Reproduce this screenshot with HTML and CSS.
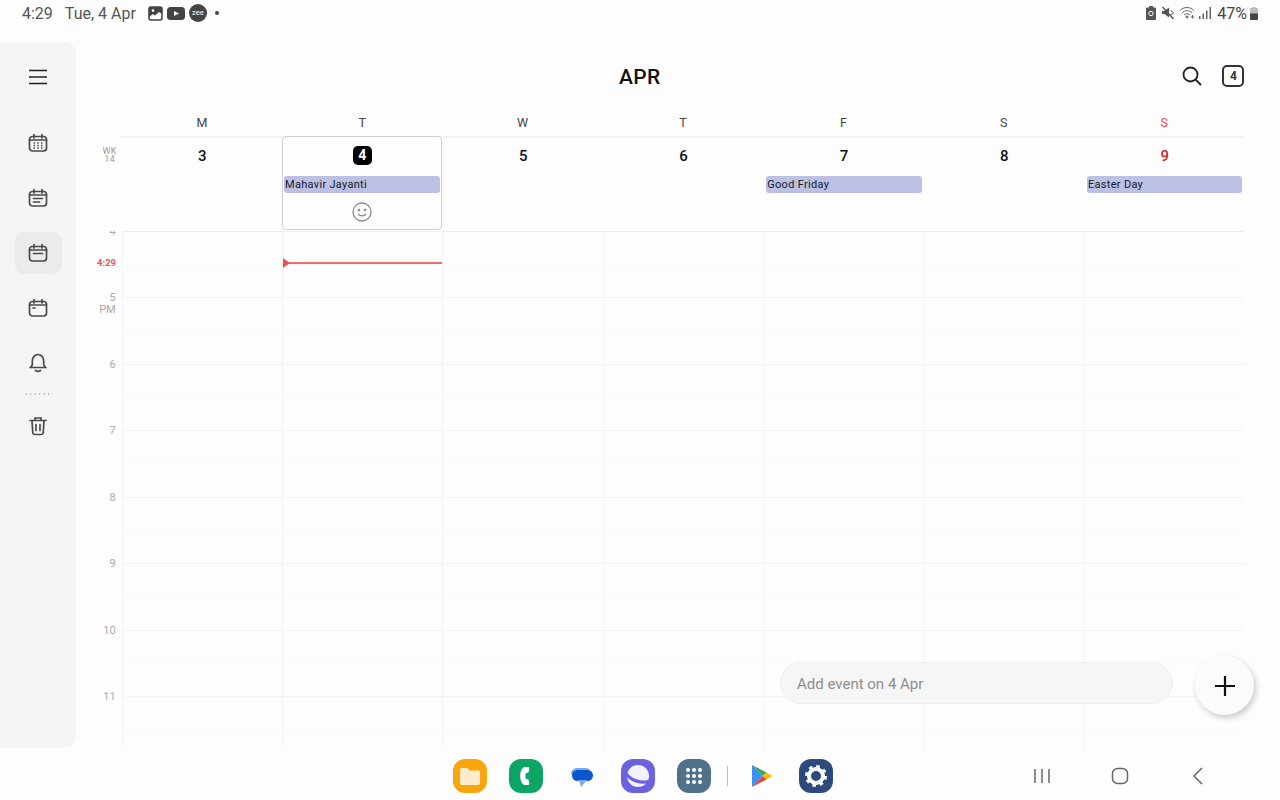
FILE: index.html
```html
<!DOCTYPE html>
<html lang="en">
<head>
<meta charset="utf-8">
<title>Calendar</title>
<link rel="stylesheet" href="styles.css">
</head>
<body>
<div class="status">
  <span class="clock">4:29</span>
  <span class="date">Tue, 4 Apr</span>
  <span class="notifs">
    <svg width="15" height="15" viewBox="0 0 15 15"><rect x="1" y="1" width="13" height="13" rx="2" fill="none" stroke="#444" stroke-width="1.6"/><path d="M1 1h13v7l-3-2-4 3.5L5 8l-4 3z" fill="#444"/><circle cx="5" cy="4.600" r="1.300" fill="#fff"/></svg>
    <svg width="18" height="13" viewBox="0 0 18 13"><rect width="18" height="13" rx="3.500" fill="#444"/><path d="M7 4l5 2.500L7 9z" fill="#fff"/></svg>
    <span class="zee">zee</span>
    <span class="dot"></span>
  </span>
  <span class="sysicons">
    <svg width="10" height="14" viewBox="0 0 10 14"><path d="M3 0h4v1.500h2a1 1 0 0 1 1 1V13a1 1 0 0 1-1 1H1a1 1 0 0 1-1-1V2.500a1 1 0 0 1 1-1h2z" fill="#555"/><circle cx="5" cy="7.500" r="2.200" fill="none" stroke="#fff" stroke-width="1"/></svg>
    <svg class="gap5" width="14" height="14" viewBox="0 0 14 14"><path d="M1 5h2.500L8 1.500v10L3.500 8H1z" fill="#555"/><path d="M9.500 4.500l3 2M9.500 8.500l3-1" stroke="#555" stroke-width="1"/><path d="M1.500 1l11 12" stroke="#555" stroke-width="1.400"/></svg>
    <svg class="gap4" width="17" height="14" viewBox="0 0 17 14" fill="none" stroke="#666" stroke-width="1"><path d="M1 4.500c4-4 10-4 14 0"/><path d="M3 6.800c3-2.800 7-2.800 10 0"/><path d="M5 9c2-1.600 4-1.600 6 0"/><circle cx="8" cy="11" r="1" fill="#666"/><path d="M13.500 9v3.500M12 11h3"/></svg>
    <svg class="gap3" width="13" height="14" viewBox="0 0 13 14" fill="#666"><rect x="0" y="10" width="1.500" height="3"/><rect x="3.500" y="7.500" width="1.500" height="5.500"/><rect x="7" y="4.500" width="1.500" height="8.500"/><rect x="10.500" y="1" width="1.500" height="12"/></svg>
    <span class="pct gap5">47%</span>
    <svg class="gap3" width="8" height="13" viewBox="0 0 8 13"><path d="M2.500 0h3v1H7a1 1 0 0 1 1 1v10a1 1 0 0 1-1 1H1a1 1 0 0 1-1-1V2a1 1 0 0 1 1-1h1.500z" fill="#bbb"/><path d="M0 6.500h8V12a1 1 0 0 1-1 1H1a1 1 0 0 1-1-1z" fill="#444"/></svg>
  </span>
</div>

<div class="middle">
  <aside class="rail">
    <button class="rail-btn menu"><svg width="18" height="16" viewBox="0 0 18 16" stroke="#222" stroke-width="1.700"><path d="M0 1.500h18M0 8h18M0 14.500h18"/></svg></button>
    <div class="rail-group">
      <button class="rail-btn"><svg class="ico" viewBox="0 0 20 20"><rect x="1.500" y="3.500" width="17" height="14.500" rx="3"/><path d="M6 1.500v3.500M14 1.500v3.500M1.500 7h17"/><path class="thin" d="M5.500 10h1.500M9.250 10h1.500M13 10h1.500M5.500 12.500h1.500M9.250 12.500h1.500M13 12.500h1.500M5.500 15h1.500M9.250 15h1.500M13 15h1.500"/></svg></button>
      <button class="rail-btn"><svg class="ico" viewBox="0 0 20 20"><rect x="1.500" y="3.500" width="17" height="14.500" rx="3"/><path d="M6 1.500v3.500M14 1.500v3.500M1.500 7h17M5.500 10.500h9M5.500 14h6"/></svg></button>
      <button class="rail-btn active"><svg class="ico" viewBox="0 0 20 20"><rect x="1.500" y="3.500" width="17" height="14.500" rx="3"/><path d="M6 1.500v3.500M14 1.500v3.500M1.500 7h17M5.500 10.500h9"/></svg></button>
      <button class="rail-btn"><svg class="ico" viewBox="0 0 20 20"><rect x="1.500" y="3.500" width="17" height="14.500" rx="3"/><path d="M6 1.500v3.500M14 1.500v3.500M1.500 7h17M5 10h2"/></svg></button>
      <button class="rail-btn"><svg class="ico" viewBox="0 0 20 20"><path d="M2.500 14.500h15l-1.800-2.500V8a5.700 6.500 0 0 0-11.400 0v4z"/><path d="M7.500 17.500c1.500 1 3.500 1 5 0"/></svg></button>
    </div>
    <div class="rail-dots"></div>
    <button class="rail-btn"><svg class="ico" viewBox="0 0 20 20"><path d="M2 4.500h16M4 4.500l.8 12.500a2 2 0 0 0 2 1.500h6.400a2 2 0 0 0 2-1.500L16 4.500M7 4.500V2h6v2.500M8 8.500v6M12 8.500v6"/></svg></button>
  </aside>

  <main class="cal">
    <header class="cal-head">
      <h1 class="month">APR</h1>
      <div class="cal-actions">
        <svg width="22" height="22" viewBox="0 0 22 22" fill="none" stroke="#222" stroke-width="1.800"><circle cx="9.500" cy="9.500" r="7"/><path d="M14.500 14.500l5.500 5.500"/></svg>
        <span class="today-btn">4</span>
      </div>
    </header>

    <div class="weekdays">
      <span>M</span><span>T</span><span>W</span><span>T</span><span>F</span><span>S</span><span class="sun">S</span>
    </div>

    <div class="allday">
      <div class="wk">WK<br>14</div>
      <div class="day"><span class="num">3</span></div>
      <div class="day today">
        <span class="num badge">4</span>
        <span class="pill">Mahavir Jayanti</span>
        <svg class="smile" width="20" height="20" viewBox="0 0 20 20" fill="none" stroke="#8a8a8a" stroke-width="1.300"><circle cx="10" cy="10" r="9"/><circle cx="7" cy="8" r=".7" fill="#8a8a8a"/><circle cx="13" cy="8" r=".7" fill="#8a8a8a"/><path d="M6 12c2 2.500 6 2.500 8 0"/></svg>
      </div>
      <div class="day"><span class="num">5</span></div>
      <div class="day"><span class="num">6</span></div>
      <div class="day"><span class="num">7</span><span class="pill">Good Friday</span></div>
      <div class="day"><span class="num">8</span></div>
      <div class="day"><span class="num red">9</span><span class="pill">Easter Day</span></div>
    </div>

    <div class="timeline">
      <div class="hour first"><div class="label">4</div><i></i><i class="now-cell"><span class="now-line"></span></i><i></i><i></i><i></i><i></i><i></i><div class="now-label">4:29</div></div>
      <div class="hour"><div class="label">5<br>PM</div><i></i><i></i><i></i><i></i><i></i><i></i><i></i></div>
      <div class="hour"><div class="label">6</div><i></i><i></i><i></i><i></i><i></i><i></i><i></i></div>
      <div class="hour"><div class="label">7</div><i></i><i></i><i></i><i></i><i></i><i></i><i></i></div>
      <div class="hour"><div class="label">8</div><i></i><i></i><i></i><i></i><i></i><i></i><i></i></div>
      <div class="hour"><div class="label">9</div><i></i><i></i><i></i><i></i><i></i><i></i><i></i></div>
      <div class="hour"><div class="label">10</div><i></i><i></i><i></i><i></i><i></i><i></i><i></i></div>
      <div class="hour"><div class="label">11</div><i></i><i></i><i></i><i></i><i></i><i></i><i></i></div>
    </div>

    <div class="add-event">Add event on 4 Apr</div>
    <button class="fab"><svg width="22" height="22" viewBox="0 0 22 22" stroke="#111" stroke-width="2.200"><path d="M11 1v20M1 11h20"/></svg></button>
  </main>
</div>

<footer class="dock">
  <div class="apps">
    <svg class="app" viewBox="0 0 34 34"><rect width="34" height="34" rx="12" fill="#f7a60e"/><path d="M7 11a2 2 0 0 1 2-2h5.500l2 2.500H25a2 2 0 0 1 2 2V24a2 2 0 0 1-2 2H9a2 2 0 0 1-2-2z" fill="#fdeccb"/></svg>
    <svg class="app" viewBox="0 0 34 34"><rect width="34" height="34" rx="12" fill="#0ba663"/><path d="M15 8h4c1 0 1.500.8 1.300 1.700l-.7 3.300c-.2.800-1 1.200-1.800 1l-1-.2c-.3 1.500-.3 4.900 0 6.400l1-.2c.8-.2 1.600.2 1.800 1l.7 3.300c.2.900-.3 1.700-1.300 1.700h-4c-3-2-3.800-5.500-3.800-9s.8-7 3.800-9z" fill="#fff"/></svg>
    <svg class="app" viewBox="0 0 34 34"><circle cx="17" cy="17" r="17" fill="#fff"/><path d="M6 15c0-4 3-6 6-6h9c2 0 3 1 4 2l-10 8z" fill="#80a9ef"/><rect x="7" y="11" width="21" height="11" rx="5.500" fill="#0b57d0"/><path d="M13 21h9l-6 7-1-4z" fill="#80a9ef"/></svg>
    <svg class="app" viewBox="0 0 34 34"><rect width="34" height="34" rx="12" fill="#6a62df"/><circle cx="17" cy="17" r="11" fill="#f3f1ff"/><path d="M4.500 14C10 22 20 25 30 22" fill="none" stroke="#6a62df" stroke-width="3.200"/></svg>
    <svg class="app" viewBox="0 0 34 34"><rect width="34" height="34" rx="12" fill="#4f7189"/><g fill="#fff"><circle cx="11" cy="11" r="2"/><circle cx="17" cy="11" r="2"/><circle cx="23" cy="11" r="2"/><circle cx="11" cy="17" r="2"/><circle cx="17" cy="17" r="2"/><circle cx="23" cy="17" r="2"/><circle cx="11" cy="23" r="2"/><circle cx="17" cy="23" r="2"/><circle cx="23" cy="23" r="2"/></g></svg>
    <span class="divider"></span>
    <svg class="app" viewBox="0 0 34 34"><circle cx="17" cy="17" r="17" fill="#fff"/><path d="M9 6v22l11-11z" fill="#3f8ff0"/><path d="M9 6l14.500 7.500L20 17z" fill="#34a853"/><path d="M9 28l14.500-7.500L20 17z" fill="#ea4335"/><path d="M23.500 13.500l6 3.500-6 3.500L20 17z" fill="#fbbc04"/></svg>
    <svg class="app" viewBox="0 0 34 34"><rect width="34" height="34" rx="12" fill="#2c4a7c"/><circle cx="17" cy="17" r="7" fill="none" stroke="#fff" stroke-width="4"/><circle cx="17" cy="17" r="9.500" fill="none" stroke="#fff" stroke-width="3" stroke-dasharray="3.500 3.960"/></svg>
  </div>
  <nav class="navkeys">
    <svg width="18" height="16" viewBox="0 0 18 16" stroke="#666" stroke-width="1.500"><path d="M2 1v14M9 1v14M16 1v14"/></svg>
    <svg width="18" height="18" viewBox="0 0 18 18" fill="none" stroke="#666" stroke-width="1.500"><rect x="1.500" y="1.500" width="15" height="15" rx="5"/></svg>
    <svg class="back" width="12" height="18" viewBox="0 0 12 18" fill="none" stroke="#666" stroke-width="1.500"><path d="M10 1L2 9l8 8"/></svg>
  </nav>
</footer>
</body>
</html>
```

FILE: styles.css
```css
* { box-sizing: border-box; }
html, body { margin: 0; height: 800px; overflow: hidden; }
body {
  background: #fdfdfd;
  font-family: Roboto, "Liberation Sans", sans-serif;
  display: flex;
  flex-direction: column;
  color: #111;
}
button { border: 0; background: none; padding: 0; font: inherit; }

/* status bar */
.status {
  height: 42px;
  flex: none;
  display: flex;
  align-items: center;
  padding: 0 22px 16px;
  color: #555;
  font-size: 16px;
}
.date { margin-left: 12px; }
.notifs { display: flex; align-items: center; gap: 4px; margin-left: 12px; }
.zee {
  width: 18px; height: 18px; border-radius: 50%;
  background: #444; color: #ddd;
  font-size: 7.500px; font-weight: 700; line-height: 18px; text-align: center;
  overflow: hidden;
}
.dot { width: 4px; height: 4px; border-radius: 50%; background: #444; margin-left: 4px; }
.sysicons { margin-left: auto; display: flex; align-items: center; }
.gap3 { margin-left: 3px; }
.gap4 { margin-left: 4px; }
.gap5 { margin-left: 5px; }
.pct { font-size: 16px; color: #444; }

.middle { flex: none; height: 706px; display: flex; }

/* side rail */
.rail {
  width: 76px;
  flex: none;
  background: #f5f5f5;
  border-radius: 0 12px 12px 0;
  padding: 14px 14px 0 15px;
  display: flex;
  flex-direction: column;
}
.rail-btn {
  width: 47px; height: 42px; flex: none;
  display: flex; align-items: center; justify-content: center;
  padding-right: 1px;
  border-radius: 9px;
}
.rail-btn.active { background: #ebebeb; }
.rail-group { display: flex; flex-direction: column; gap: 13px; margin-top: 24px; }
.rail-dots {
  height: 2px; margin: 9px 9px 10px;
  background-image: radial-gradient(circle, #aaa 1px, transparent 1px);
  background-size: 4.500px 2px;
}
.ico { width: 20px; height: 20px; fill: none; stroke: #4a4a4a; stroke-width: 1.700; stroke-linecap: round; }
.ico .thin { stroke-width: 1.400; stroke-linecap: butt; }

/* calendar */
.cal { flex: 1; position: relative; display: flex; flex-direction: column; padding-right: 35.640px; min-width: 0; }
.cal-head { height: 70px; flex: none; display: flex; align-items: center; padding-left: 543px; }
.month { margin: 0; font-size: 21px; font-weight: 500; color: #111; letter-spacing: .3px; }
.cal-actions { margin-left: auto; display: flex; align-items: center; gap: 19px; padding-bottom: 2px; }
.today-btn {
  width: 22px; height: 22px;
  border: 2px solid #333; border-radius: 5px;
  font-size: 12px; font-weight: 700; color: #333;
  display: flex; align-items: center; justify-content: center;
}

.weekdays {
  height: 24px; flex: none;
  margin-left: 45.700px;
  display: grid; grid-template-columns: repeat(7, 1fr);
  font-size: 12.500px; color: #444; text-align: center; line-height: 22px;
}
.sun { color: #d9485a; }

.allday {
  height: 95px; flex: none;
  display: grid;
  grid-template-columns: repeat(7, 1fr);
  border-top: 2px solid #f2f2f2;
  margin-left: 45.700px;
  position: relative;
}
.allday::before {
  content: ""; position: absolute; left: -2px; top: -2px; width: 2px; height: 2px; background: #f2f2f2;
}
.wk {
  position: absolute; left: -20px; top: 9px;
  font-size: 9px; line-height: 8px; color: #999; text-align: center; width: 16px; letter-spacing: .3px;
}
.day { display: flex; flex-direction: column; align-items: center; padding: 8px 2px 0 3px; }
.num { font-size: 15px; font-weight: 500; line-height: 20px; height: 20px; color: #111; }
.num.red { color: #c8242f; }
.num.badge {
  width: 19px; height: 19px; border-radius: 5px;
  background: #000; color: #fff; font-size: 14px; font-weight: 700;
  line-height: 19px; text-align: center;
}
.pill {
  align-self: stretch; height: 17px; margin-top: 10px;
  background: #bcc1e4; border-radius: 3px; color: #15172b;
  font-size: 11px; line-height: 17px; padding-left: 1px; letter-spacing: .3px;
}
.today {
  position: relative; z-index: 1;
  margin: -2px 0 0 0; height: 94px; padding: 9px 1px 0;
  background: #fdfdfd;
  border: 1px solid #cfcfcf; border-radius: 4px;
}
.today .pill { margin-top: 11px; }
.smile { margin-top: 9px; }

.timeline { flex: 1; overflow: hidden; min-height: 0; }
.hour {
  height: 66.450px;
  display: grid;
  grid-template-columns: 45.700px repeat(7, 1fr);
  position: relative;
}
.hour i {
  display: block;
  border-left: 1px solid #f4f4f4;
  background: linear-gradient(#f3f3f3, #f3f3f3) 0 0 / 100% 1px no-repeat,
              linear-gradient(#fafafa, #fafafa) 0 33px / 100% 1px no-repeat;
  position: relative;
}
.hour.first i {
  background: linear-gradient(#eeeeee, #eeeeee) 0 0 / 100% 1px no-repeat,
              linear-gradient(#fafafa, #fafafa) 0 33px / 100% 1px no-repeat;
}
.hour .label {
  text-align: right; padding-right: 6px; margin-top: -5px;
  font-size: 11px; line-height: 12px; color: #aaa;
}
.now-line {
  position: absolute; left: 0; right: -1px; top: 31px;
  height: 2px; background: #ec6d6f;
}
.now-line::before {
  content: ""; position: absolute; left: 0; top: -4px;
  border-left: 7px solid #ec5558;
  border-top: 5px solid transparent; border-bottom: 5px solid transparent;
}
.now-label {
  position: absolute; left: 21px; top: 25px;
  font-size: 9.500px; line-height: 14px; font-weight: 700; color: #ec5558;
}

.add-event {
  position: absolute; left: 704px; top: 620px;
  width: 393px; height: 42px;
  background: #f6f6f6; border: 1px solid #f0f0f0; border-radius: 21px;
  padding-left: 16px; line-height: 42px;
  font-size: 15px; color: #8e8e8e;
}
.fab {
  position: absolute; left: 1119px; top: 614px;
  width: 59px; height: 59px; border-radius: 50%;
  background: #fbfbfb;
  box-shadow: 2px 3px 6px rgba(0,0,0,.2);
  display: flex; align-items: center; justify-content: center;
}

/* dock */
.dock { flex: none; height: 52px; display: flex; align-items: center; padding: 4px 0 0 453px; }
.apps { display: flex; align-items: center; gap: 22px; }
.app { width: 34px; height: 34px; flex: none; display: block; }
.divider { width: 1px; height: 20px; background: #bbb; margin: 0 -7px 0 -6px; }
.navkeys { margin-left: 200px; display: flex; align-items: center; gap: 60px; }
.back { margin-left: 3px; }
```
